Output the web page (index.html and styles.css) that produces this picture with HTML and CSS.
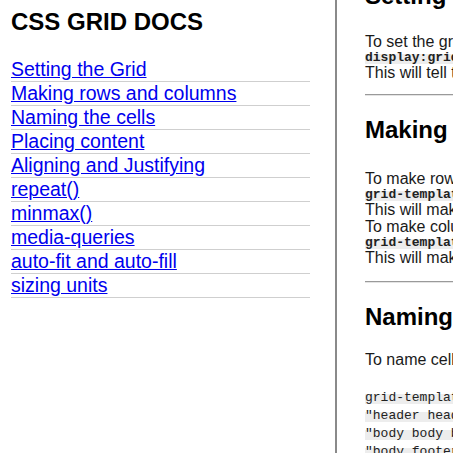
FILE: index.html
```html
<!DOCTYPE html>
<html lang="en">
<head>
<meta charset="utf-8">
<title>CSS Grid Docs</title>
<link rel="stylesheet" href="styles.css">
<script src="script.js" defer></script>
</head>
<body>
<div class="page">
  <nav class="sidebar">
    <h1 class="site-title">CSS GRID DOCS</h1>
    <ul class="toc">
      <li><a href="#setting">Setting the Grid</a></li>
      <li><a href="#making">Making rows and columns</a></li>
      <li><a href="#naming">Naming the cells</a></li>
      <li><a href="#placing">Placing content</a></li>
      <li><a href="#aligning">Aligning and Justifying</a></li>
      <li><a href="#repeat">repeat()</a></li>
      <li><a href="#minmax">minmax()</a></li>
      <li><a href="#media">media-queries</a></li>
      <li><a href="#autofit">auto-fit and auto-fill</a></li>
      <li><a href="#units">sizing units</a></li>
    </ul>
  </nav>
  <main class="main">
    <section class="doc" id="setting">
      <h2 class="doc-title doc-title-a">Setting the Grid</h2>
      <div class="lines">
        <span class="txt">To set the grid, give the container:</span>
        <code class="code-inline">display:grid;</code>
        <span class="txt">This will tell the browser to use grid layout.</span>
      </div>
      <hr class="rule rule-a">
    </section>
    <section class="doc" id="making">
      <h2 class="doc-title doc-title-b">Making rows and columns</h2>
      <div class="lines">
        <span class="txt">To make rows, use:</span>
        <code class="code-inline">grid-template-rows: 100px 200px;</code>
        <span class="txt">This will make two rows.</span>
        <span class="txt">To make columns, use:</span>
        <code class="code-inline">grid-template-columns: 1fr 2fr;</code>
        <span class="txt">This will make two columns.</span>
      </div>
      <hr class="rule rule-b">
    </section>
    <section class="doc" id="naming">
      <h2 class="doc-title doc-title-c">Naming the cells</h2>
      <div class="lines">
        <span class="txt">To name cells, use grid-template-areas:</span>
      </div>
      <div class="code-block">
        <code class="code-row">grid-template-areas:</code>
        <code class="code-row">"header header header"</code>
        <code class="code-row">"body body body"</code>
        <code class="code-row">"body footer footer";</code>
      </div>
    </section>
  </main>
</div>
</body>
</html>
```

FILE: styles.css
```css
html, body {
  margin: 0;
  padding: 0;
  overflow: hidden;
  background: #fff;
}

body {
  font-family: "Liberation Sans", Arial, Helvetica, sans-serif;
  color: #1a1a1a;
}

.page {
  display: grid;
  grid-template-columns: 337px 640px;
  height: 100vh;
}

.sidebar {
  box-sizing: border-box;
  padding: 8px 25px 0 11px;
  border-right: 2px solid #8a8a8a;
  height: 100vh;
}

.site-title {
  margin: 0 0 22px;
  font-size: 24px;
  line-height: 28px;
  font-weight: bold;
  color: #000;
}

.toc {
  list-style: none;
  margin: 0;
  padding: 0;
}

.toc li {
  font-size: 19.5px;
  line-height: 23px;
  border-bottom: 1px solid #cfcfcf;
  white-space: nowrap;
}

.toc a {
  color: #0000ee;
  text-decoration: underline;
}

.main {
  height: 100vh;
  overflow: hidden;
  padding: 20px 0 0 28px;
  box-sizing: border-box;
}

.doc-title {
  margin: 0;
  font-size: 24px;
  line-height: 28px;
  font-weight: bold;
  color: #000;
  white-space: nowrap;
}

.doc-title-a { margin-bottom: 23px; }
.doc-title-b { margin-bottom: 26px; }
.doc-title-c { margin-bottom: 20px; }

.lines {
  display: flex;
  flex-direction: column;
  align-items: flex-start;
}

.txt {
  font-size: 16px;
  line-height: 17px;
  white-space: nowrap;
}

.code-inline {
  display: block;
  margin-top: 4px;
  height: 10px;
  font-family: "Liberation Mono", "Courier New", monospace;
  font-size: 13px;
  font-weight: bold;
  line-height: 7px;
  background: #ededed;
  white-space: nowrap;
  color: #222;
}

.rule {
  height: 0;
  border: 0;
  border-top: 1px solid #9a9a9a;
  border-bottom: 1px solid #e4e4e4;
  margin: 0;
  width: 400px;
}

.rule-a { margin: 13px 0 20px; }
.rule-b { margin: 15px 0 20px; }

.code-block {
  display: flex;
  flex-direction: column;
  gap: 8px;
  margin-top: 26px;
}

.code-row {
  display: block;
  height: 10px;
  font-family: "Liberation Mono", "Courier New", monospace;
  font-size: 13px;
  line-height: 8px;
  background: #ededed;
  white-space: pre;
  color: #222;
}
```

FILE: script.js
```js
document.addEventListener('DOMContentLoaded', function () {
  var main = document.querySelector('.main');
  if (main) { main.scrollTop = 38; }
});
```
